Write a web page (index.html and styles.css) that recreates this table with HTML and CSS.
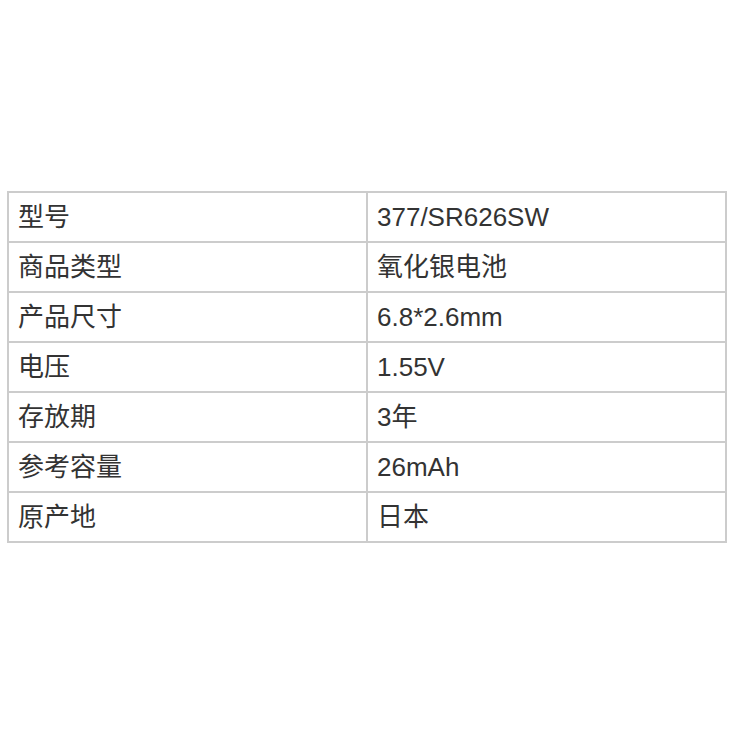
FILE: index.html
```html
<!DOCTYPE html>
<html lang="zh">
<head>
<meta charset="utf-8">
<title>参数</title>
<link rel="stylesheet" href="styles.css">
</head>
<body>
<div class="page">
  <table class="spec">
    <tr><td>型号</td><td>377/SR626SW</td></tr>
    <tr><td>商品类型</td><td>氧化银电池</td></tr>
    <tr><td>产品尺寸</td><td>6.8*2.6mm</td></tr>
    <tr><td>电压</td><td>1.55V</td></tr>
    <tr><td>存放期</td><td>3年</td></tr>
    <tr><td>参考容量</td><td>26mAh</td></tr>
    <tr><td>原产地</td><td>日本</td></tr>
  </table>
</div>
</body>
</html>
```
FILE: styles.css
```css
html, body {
  margin: 0;
  padding: 0;
  background: #fff;
}
.page {
  padding: 191px 7px 0 7px;
}
.spec {
  width: 720px;
  border-collapse: collapse;
  font-family: "Liberation Sans", "Noto Sans CJK SC", sans-serif;
  font-size: 26px;
  color: #333;
}
.spec td {
  border: 2px solid #ccc;
  height: 50px;
  padding: 0 0 0 9px;
  box-sizing: border-box;
  vertical-align: middle;
  width: 50%;
  line-height: 1;
}
```
